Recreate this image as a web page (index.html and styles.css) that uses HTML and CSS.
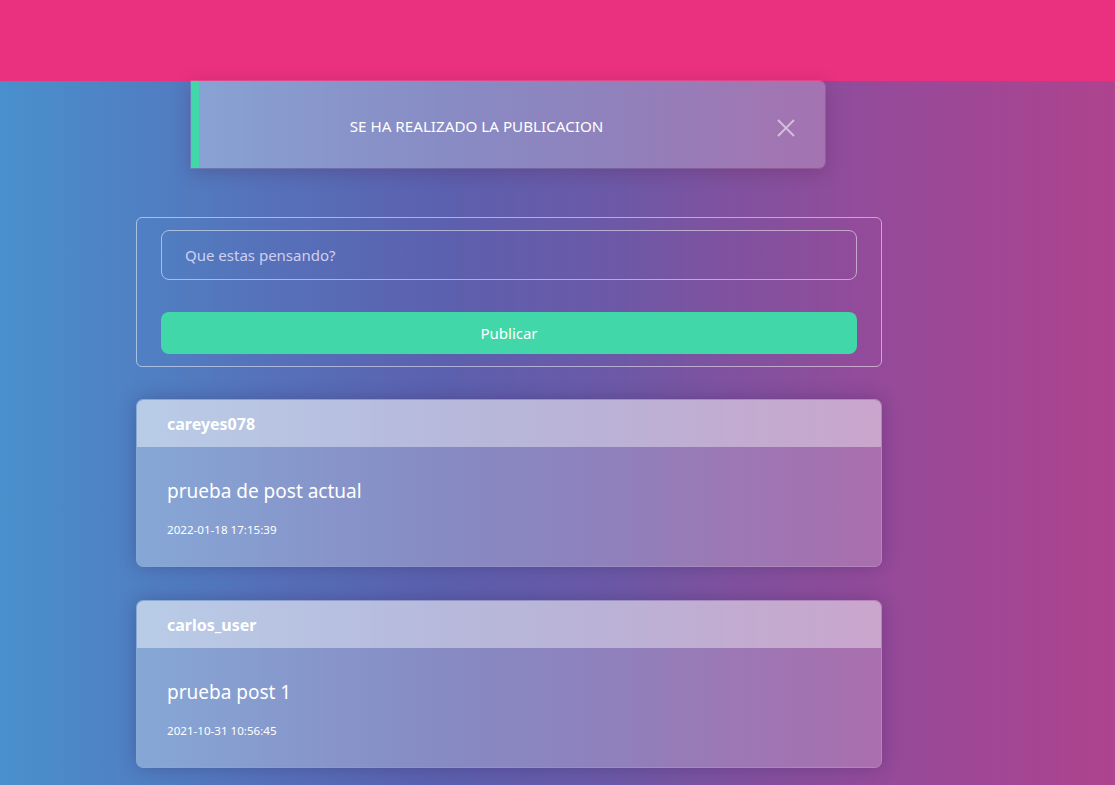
FILE: index.html
```html
<!DOCTYPE html>
<html lang="es">
<head>
<meta charset="utf-8">
<title>Publicaciones</title>
<link rel="stylesheet" href="styles.css">
</head>
<body>
<header class="topbar"></header>
<main class="page">
  <div class="toast">
    <div class="toast-msg">SE HA REALIZADO LA PUBLICACION</div>
    <button class="toast-close" type="button" aria-label="Cerrar">
      <svg width="18" height="18" viewBox="0 0 18 18"><path d="M1 1 L17 17 M17 1 L1 17" stroke="currentColor" stroke-width="1.8" fill="none"/></svg>
    </button>
  </div>
  <form class="composer">
    <input class="composer-input" type="text" placeholder="Que estas pensando?">
    <button class="composer-btn" type="button">Publicar</button>
  </form>
  <article class="post">
    <div class="post-head">careyes078</div>
    <div class="post-body">
      <p class="post-text">prueba de post actual</p>
      <p class="post-date">2022-01-18 17:15:39</p>
    </div>
  </article>
  <article class="post">
    <div class="post-head">carlos_user</div>
    <div class="post-body">
      <p class="post-text">prueba post 1</p>
      <p class="post-date">2021-10-31 10:56:45</p>
    </div>
  </article>
</main>
</body>
</html>
```
FILE: styles.css
```css
* { box-sizing: border-box; }
html, body { margin: 0; padding: 0; }
body {
  min-height: 785px;
  font-family: "Noto Sans", "Open Sans", sans-serif;
  color: #fff;
  background: linear-gradient(to right, #4990cd 0%, #5670b9 25%, #5c60ae 40%, #6c59a7 55%, #7f529f 65%, #964a99 80%, #ae438e 100%);
  background-attachment: fixed;
  overflow: hidden;
}
.topbar {
  height: 81px;
  background: #e9317f;
}
.page {
  width: 746px;
  margin-left: 136px;
  display: flex;
  flex-direction: column;
}
.toast {
  width: 634px;
  height: 87px;
  margin-left: 55px;
  display: flex;
  align-items: center;
  background: linear-gradient(to right, rgba(255,255,255,0.31), rgba(255,255,255,0.21));
  border-left: 8px solid #42d7a8;
  border-radius: 0 6px 6px 0;
  box-shadow: 0 4px 18px rgba(80, 20, 60, 0.25);
  outline: 1px solid rgba(255,255,255,0.12);
}
.toast-msg {
  flex: 1;
  text-align: center;
  font-size: 15.2px;
  padding-top: 2px;
}
.toast-close {
  width: 64px;
  margin-right: 7px;
  background: none;
  border: 0;
  padding: 6px 0 0;
  color: rgba(255,255,255,0.55);
  display: flex;
  justify-content: center;
  cursor: pointer;
}
.composer {
  margin: 49px 0 0;
  border: 1px solid rgba(255,255,255,0.5);
  border-radius: 6px;
  padding: 12px 24px 12px;
  display: flex;
  flex-direction: column;
  gap: 32px;
}
.composer-input {
  height: 50px;
  border: 1px solid rgba(255,255,255,0.5);
  border-radius: 8px;
  background: transparent;
  padding: 0 23px;
  font-family: inherit;
  font-size: 15px;
  color: #fff;
  outline: none;
}
.composer-input::placeholder { color: rgba(230,225,250,0.85); }
.composer-btn {
  height: 42px;
  border: 0;
  border-radius: 8px;
  background: #42d7a8;
  color: #fff;
  font-family: inherit;
  font-size: 15px;
}
.post {
  margin-top: 32px;
  border: 1px solid rgba(255,255,255,0.32);
  border-radius: 7px;
  overflow: hidden;
  box-shadow: 0 0 18px rgba(40, 20, 80, 0.28);
}
.post + .post { margin-top: 33px; }
.post-head {
  height: 47px;
  display: flex;
  align-items: center;
  padding: 0 30px;
  background: linear-gradient(to right, rgba(255,255,255,0.6), rgba(255,255,255,0.5));
  font-weight: 700;
  font-size: 16px;
}
.post-body {
  background: linear-gradient(to right, rgba(255,255,255,0.31), rgba(255,255,255,0.2));
  padding: 30px 30px 28px;
}
.post-text {
  margin: 0;
  font-size: 19px;
  line-height: 28px;
}
.post-date {
  margin: 17px 0 0;
  font-size: 11.6px;
  line-height: 16px;
}
```
